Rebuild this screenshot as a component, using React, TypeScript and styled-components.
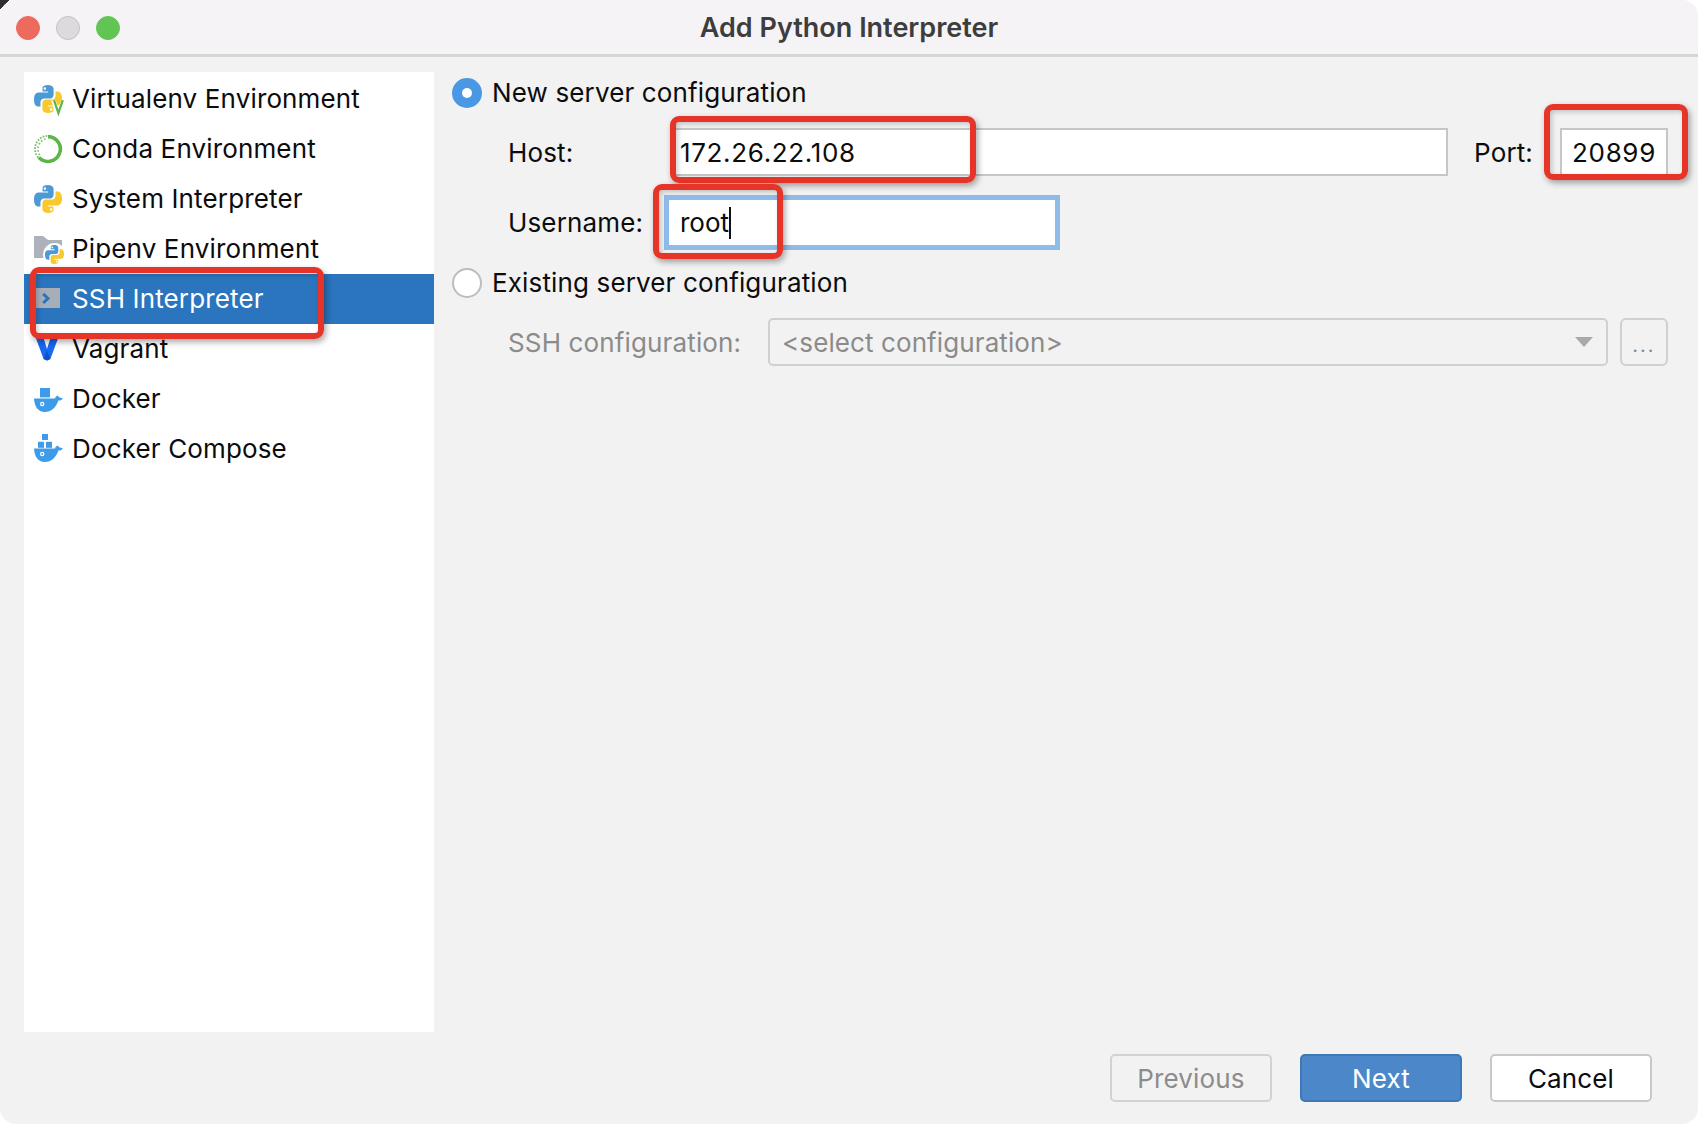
import React from 'react';
import styled, { createGlobalStyle } from 'styled-components';

const GlobalStyle = createGlobalStyle`
	html, body {
		margin: 0;
		padding: 0;
		background: linear-gradient(135deg, #2e2e2e 0 7px, #ffffff 7px);
	}
`;

const SNAKE = 'M8 0C4.6 0 4.9 1.5 4.9 1.5V3.2H8.1V3.8H2.6S0 3.6 0 7.2S2.3 10.8 2.3 10.8H3.7V8.9S3.6 6.7 5.8 6.7H9.2S11.2 6.7 11.2 4.7V2.2S11.5 0 8 0ZM6.2 1.1A.7.7 0 1 1 6.2 2.5A.7.7 0 1 1 6.2 1.1Z';

const PythonMark: React.FC = () => (
	<g transform="translate(1 1) scale(0.875 1)">
		<path d={SNAKE} fill="#4b9ad6" fillRule="evenodd" />
		<path d={SNAKE} fill="#f8c82c" fillRule="evenodd" transform="rotate(180 8 7)" />
	</g>
);

const Icon = styled.svg.attrs({ width: 32, height: 32, viewBox: '0 0 16 16' })`
	overflow: visible;
`;

const VirtualenvIcon = () => (
	<Icon>
		<PythonMark />
		<path d="M10.6 8.6L13.2 15.2L15.8 8.6" fill="none" stroke="#ffffff" strokeWidth="2.2" />
		<path d="M11 8.6L13.2 15L15.4 8.6" fill="none" stroke="#5bb549" strokeWidth="1.1" />
	</Icon>
);

const CondaIcon = () => (
	<Icon>
		<path d="M8 1.8A6.2 6.2 0 1 1 3.4 12.2" fill="none" stroke="#5bb549" strokeWidth="1.8" />
		<path d="M7.6 1.4A6.6 6.6 0 0 0 3.2 12.4" fill="none" stroke="#6fbb5e" strokeWidth="0.9" strokeDasharray="0.8 0.7" />
		<path d="M6.8 3A5.2 5.2 0 0 0 4.2 11.4" fill="none" stroke="#7cc36c" strokeWidth="0.9" strokeDasharray="0.8 1" />
	</Icon>
);

const SystemIcon = () => (
	<Icon>
		<PythonMark />
	</Icon>
);

const PipenvIcon = () => (
	<Icon>
		<path d="M1 1.5H5.5L8 3.5H15V12.5H1Z" fill="#adb2ba" />
		<g transform="translate(5.8 5.3) scale(0.68)">
			<circle cx="8" cy="8" r="8.4" fill="#ffffff" />
			<PythonMark />
		</g>
	</Icon>
);

const SshIcon = () => (
	<Icon>
		<rect x="2" y="2.5" width="12" height="10" fill="#a6aeb8" />
		<path d="M5.6 5.4L8 7.7L5.6 10" fill="none" stroke="#2a75be" strokeWidth="1.5" />
	</Icon>
);

const VagrantIcon = () => (
	<Icon>
		<path d="M1 0L5.8 13L7.5 13.8L9.2 13L14 0H10L7.5 8L5 0Z" fill="#1868f2" />
		<path d="M5.8 13L7.5 13.8L9.2 13L7.5 8.8Z" fill="#1150c8" />
	</Icon>
);

const WHALE = 'M1 7.7H11.5C11.8 6.8 12.6 6.3 13 6.3C13.2 6.9 13.4 7.1 14 7.3L15.5 7.7C14.8 8.5 14 8.8 13.2 8.8C12 12.4 9.6 14.5 6.4 14.5C3 14.5 1.2 11.6 1 7.7ZM5.1 9.4A1.1 1.1 0 1 0 5.1 11.6A1.1 1.1 0 1 0 5.1 9.4ZM5.1 10A.5.5 0 1 1 5.1 11A.5.5 0 1 1 5.1 10Z';

const DockerIcon = () => (
	<Icon>
		<rect x="4" y="2.5" width="5" height="4.7" fill="#3d9be9" />
		<path d={WHALE} fill="#3d9be9" fillRule="evenodd" />
	</Icon>
);

const ComposeIcon = () => (
	<Icon>
		<rect x="5" y="0.5" width="3" height="3" fill="#3d9be9" />
		<rect x="3" y="4.4" width="3" height="3" fill="#3d9be9" />
		<rect x="7" y="4.4" width="3" height="3" fill="#3d9be9" />
		<path d={WHALE} fill="#3d9be9" fillRule="evenodd" />
	</Icon>
);

const ITEMS = [
	{ label: 'Virtualenv Environment', icon: <VirtualenvIcon /> },
	{ label: 'Conda Environment', icon: <CondaIcon /> },
	{ label: 'System Interpreter', icon: <SystemIcon /> },
	{ label: 'Pipenv Environment', icon: <PipenvIcon /> },
	{ label: 'SSH Interpreter', icon: <SshIcon />, selected: true },
	{ label: 'Vagrant', icon: <VagrantIcon /> },
	{ label: 'Docker', icon: <DockerIcon /> },
	{ label: 'Docker Compose', icon: <ComposeIcon /> },
];

const App: React.FC = () => {
	return (
		<>
			<GlobalStyle />
			<Window>
				<TitleBar>
					<Lights>
						<Light $color="#ed6a5e" />
						<Light $color="#dcdadd" $border="#c2c0c4" />
						<Light $color="#61c554" />
					</Lights>
					<Title>Add Python Interpreter</Title>
				</TitleBar>
				<Content>
					<Sidebar>
						{ITEMS.map((item) => (
							<SidebarRow key={item.label} $selected={item.selected}>
								<IconSlot>{item.icon}</IconSlot>
								<RaisedText>{item.label}</RaisedText>
								{item.selected && <Callout $left={6} $top={-7} $width={294} $height={72} />}
							</SidebarRow>
						))}
					</Sidebar>
					<Form>
						<RadioRow>
							<Radio $checked />
							<RaisedText>New server configuration</RaisedText>
						</RadioRow>
						<FieldRow $top={14} $height={48}>
							<FieldLabel $width={165}>Host:</FieldLabel>
							<TextField $grow>
								172.26.22.108
								<Callout $left={-5} $top={-14} $width={306} $height={67} />
							</TextField>
							<PortLabel>Port:</PortLabel>
							<PortField>
								20899
								<Callout $left={-18} $top={-26} $width={144} $height={76} />
							</PortField>
						</FieldRow>
						<FieldRow $top={19} $height={55}>
							<FieldLabel $width={161}>Username:</FieldLabel>
							<FocusField>
								root
								<Caret />
								<Callout $left={-16} $top={-16} $width={130} $height={75} />
							</FocusField>
						</FieldRow>
						<RadioRow $top={12}>
							<Radio />
							<RaisedText>Existing server configuration</RaisedText>
						</RadioRow>
						<FieldRow $top={14} $height={48}>
							<FieldLabel $width={260} $muted>
								SSH configuration:
							</FieldLabel>
							<Combo>
								&lt;select configuration&gt;
								<ComboArrow />
							</Combo>
							<BrowseButton>...</BrowseButton>
						</FieldRow>
					</Form>
				</Content>
				<Footer>
					<DialogButton $variant="disabled">Previous</DialogButton>
					<DialogButton $variant="primary">Next</DialogButton>
					<DialogButton $variant="default">Cancel</DialogButton>
				</Footer>
			</Window>
		</>
	);
};

const Window = styled.div`
	display: flex;
	flex-direction: column;
	width: 1698px;
	height: 1124px;
	overflow: hidden;
	border-radius: 16px;
	background: #f2f2f2;
	color: #0c0c0c;
	font-family: Inter, 'Liberation Sans', sans-serif;
	font-size: 26px;
	letter-spacing: 0.14px;
`;

const TitleBar = styled.div`
	position: relative;
	display: flex;
	align-items: center;
	justify-content: center;
	flex-shrink: 0;
	height: 54px;
	background: #f5f3f6;
	border-bottom: 3px solid #d6d6d6;
`;

const Lights = styled.div`
	position: absolute;
	left: 16px;
	top: 16px;
	display: flex;
	gap: 16px;
`;

const Light = styled.span<{ $color: string; $border?: string }>`
	box-sizing: border-box;
	width: 24px;
	height: 24px;
	border-radius: 50%;
	background: ${(props) => props.$color};
	border: 1px solid ${(props) => props.$border ?? props.$color};
`;

const Title = styled.div`
	font-size: 27px;
	font-weight: 600;
	letter-spacing: 0;
	color: #3d3d3d;
`;

const Content = styled.div`
	display: flex;
	flex: 1;
	padding: 15px 30px 0 24px;
`;

const Sidebar = styled.div`
	flex-shrink: 0;
	box-sizing: border-box;
	width: 410px;
	height: 960px;
	padding-top: 2px;
	background: #ffffff;
`;

const SidebarRow = styled.div<{ $selected?: boolean }>`
	position: relative;
	display: flex;
	align-items: center;
	height: 50px;
	padding-left: 8px;
	background: ${(props) => (props.$selected ? '#2a75be' : 'transparent')};
	color: ${(props) => (props.$selected ? '#ffffff' : '#0c0c0c')};
`;

const IconSlot = styled.span`
	display: flex;
	width: 32px;
	height: 32px;
	margin-right: 8px;
`;

const RaisedText = styled.span`
	margin-bottom: 2px;
`;

const Form = styled.div`
	flex: 1;
	margin-left: 18px;
`;

const RadioRow = styled.div<{ $top?: number }>`
	display: flex;
	align-items: center;
	height: 42px;
	margin-top: ${(props) => props.$top ?? 0}px;
`;

const Radio = styled.span<{ $checked?: boolean }>`
	box-sizing: border-box;
	flex-shrink: 0;
	width: 30px;
	height: 30px;
	margin-right: 10px;
	border-radius: 50%;
	background: ${(props) => (props.$checked ? '#4a98e4' : '#ffffff')};
	border: ${(props) => (props.$checked ? 'none' : '2px solid #bdbdbd')};
	display: flex;
	align-items: center;
	justify-content: center;

	&::after {
		content: '';
		display: ${(props) => (props.$checked ? 'block' : 'none')};
		width: 10px;
		height: 10px;
		border-radius: 50%;
		background: #ffffff;
	}
`;

const FieldRow = styled.div<{ $top: number; $height: number }>`
	display: flex;
	align-items: center;
	height: ${(props) => props.$height}px;
	margin-top: ${(props) => props.$top}px;
	padding-left: 56px;
`;

const FieldLabel = styled.div<{ $width: number; $muted?: boolean }>`
	flex-shrink: 0;
	width: ${(props) => props.$width}px;
	color: ${(props) => (props.$muted ? '#8b8b8b' : '#0c0c0c')};
`;

const PortLabel = styled.div`
	margin: 0 27px 0 26px;
`;

const TextField = styled.div<{ $grow?: boolean }>`
	position: relative;
	box-sizing: border-box;
	display: flex;
	align-items: center;
	flex: ${(props) => (props.$grow ? 1 : 'none')};
	height: 48px;
	padding-left: 5px;
	background: #ffffff;
	border: 2px solid #c6c6c6;
	letter-spacing: 0.65px;
`;

const PortField = styled(TextField)`
	justify-content: center;
	width: 108px;
	padding-left: 0;
`;

const FocusField = styled.div`
	position: relative;
	box-sizing: border-box;
	display: flex;
	align-items: center;
	width: 386px;
	height: 45px;
	padding-left: 11px;
	background: #ffffff;
	box-shadow: 0 0 0 5px #8fbbe8;
	letter-spacing: 0;
`;

const Caret = styled.span`
	width: 2px;
	height: 32px;
	background: #111111;
`;

const Combo = styled.div`
	position: relative;
	box-sizing: border-box;
	display: flex;
	align-items: center;
	flex: 1;
	height: 48px;
	padding-left: 12px;
	border: 2px solid #d0d0d0;
	border-radius: 5px;
	color: #8b8b8b;
	letter-spacing: 0.1px;
`;

const ComboArrow = styled.span`
	position: absolute;
	right: 13px;
	top: 17px;
	border-left: 9px solid transparent;
	border-right: 9px solid transparent;
	border-top: 10px solid #a9a9a9;
`;

const BrowseButton = styled.div`
	box-sizing: border-box;
	display: flex;
	align-items: flex-end;
	justify-content: center;
	flex-shrink: 0;
	width: 48px;
	height: 48px;
	margin-left: 12px;
	padding-bottom: 9px;
	border: 2px solid #d0d0d0;
	border-radius: 6px;
	color: #8b8b8b;
	font-size: 20px;
	letter-spacing: 2px;
	line-height: 1;
`;

const Callout = styled.div<{ $left: number; $top: number; $width: number; $height: number }>`
	position: absolute;
	z-index: 1;
	left: ${(props) => props.$left}px;
	top: ${(props) => props.$top}px;
	box-sizing: border-box;
	width: ${(props) => props.$width}px;
	height: ${(props) => props.$height}px;
	border: 6px solid #e63528;
	border-radius: 9px;
	box-shadow: 2px 3px 6px rgba(0, 0, 0, 0.35), inset 2px 2px 5px rgba(0, 0, 0, 0.2);
`;

const Footer = styled.div`
	display: flex;
	justify-content: flex-end;
	gap: 28px;
	height: 48px;
	margin: 22px 0;
	padding-right: 46px;
`;

const BUTTON_STYLES = {
	disabled: 'background: #f2f2f2; border-color: #d2d2d2; color: #8c8c8c;',
	primary: 'background: #4c88c9; border-color: #3f78b8; color: #ffffff;',
	default: 'background: #ffffff; border-color: #c8c8c8; color: #0c0c0c;',
};

const DialogButton = styled.div<{ $variant: keyof typeof BUTTON_STYLES }>`
	box-sizing: border-box;
	display: flex;
	align-items: center;
	justify-content: center;
	width: 162px;
	height: 48px;
	border: 2px solid;
	border-radius: 5px;
	${(props) => BUTTON_STYLES[props.$variant]}
`;

export default App;
